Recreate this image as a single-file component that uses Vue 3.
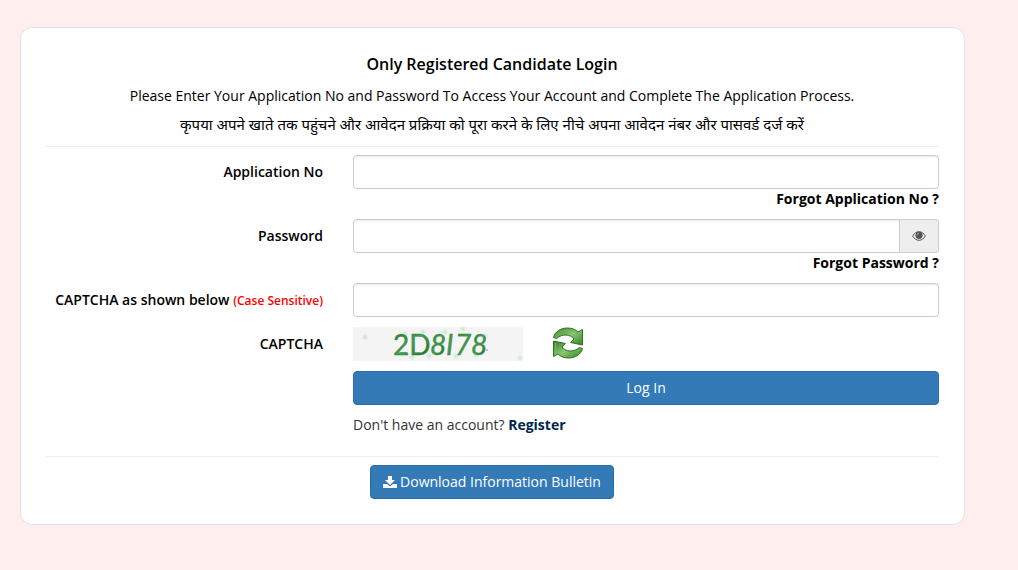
<script setup>
import { ref } from 'vue'

const applicationNo = ref('')
const password = ref('')
const captcha = ref('')
const showPassword = ref(false)
</script>

<template>
  <main class="page">
    <section class="card">
      <header class="intro">
        <h1>Only Registered Candidate Login</h1>
        <p>Please Enter Your Application No and Password To Access Your Account and Complete The Application Process.</p>
        <p class="hindi" lang="hi">कृपया अपने खाते तक पहुंचने और आवेदन प्रक्रिया को पूरा करने के लिए नीचे अपना आवेदन नंबर और पासवर्ड दर्ज करें</p>
      </header>

      <form class="login" @submit.prevent>
        <div class="row">
          <label for="application-no">Application No</label>
          <div class="field">
            <input id="application-no" v-model="applicationNo" type="text" class="control">
            <a href="#" class="forgot">Forgot Application No ?</a>
          </div>
        </div>

        <div class="row">
          <label for="password">Password</label>
          <div class="field">
            <div class="group">
              <input id="password" v-model="password" :type="showPassword ? 'text' : 'password'" class="control">
              <button type="button" class="addon" aria-label="Show password" @click="showPassword = !showPassword">
                <svg viewBox="0 0 14 12" width="14" height="12">
                  <path d="M.6 6C2.2 3.2 4.4 1.7 7 1.7S11.800 3.200 13.400 6C11.800 8.800 9.600 10.300 7 10.300S2.200 8.800.6 6Z" fill="none" stroke="#555" stroke-width="1" />
                  <circle cx="7" cy="5.300" r="3.600" fill="#555" />
                  <path d="M5 5.300C5 4.100 5.800 3.400 6.900 3.300" fill="none" stroke="#ccc" stroke-width=".8" />
                </svg>
              </button>
            </div>
            <a href="#" class="forgot">Forgot Password ?</a>
          </div>
        </div>

        <div class="row">
          <label for="captcha">CAPTCHA as shown below <small>(Case Sensitive)</small></label>
          <div class="field">
            <input id="captcha" v-model="captcha" type="text" class="control" autocomplete="off">
          </div>
        </div>

        <div class="row">
          <span class="label">CAPTCHA</span>
          <div class="field captcha">
            <svg class="code" viewBox="0 0 170 34" width="170" height="34">
              <defs>
                <linearGradient id="ink" x1="0" x2="1" y1="0" y2="1">
                  <stop offset="0" stop-color="#1d7a2c" />
                  <stop offset=".5" stop-color="#4a9a52" />
                  <stop offset="1" stop-color="#175f22" />
                </linearGradient>
                <filter id="soft" x="-1" y="-1" width="3" height="3"><feGaussianBlur stdDeviation="1" /></filter>
              </defs>
              <rect width="170" height="34" fill="#f4f4f4" />
              <g fill="#a9e5b2" filter="url(#soft)" opacity=".7">
                <circle cx="52" cy="7" r="2" /><circle cx="70" cy="5" r="2" /><circle cx="92" cy="5" r="2" />
                <circle cx="110" cy="2" r="2" /><circle cx="59" cy="30" r="2" /><circle cx="76" cy="29" r="2" />
                <circle cx="82" cy="12" r="2" /><circle cx="103" cy="29" r="2" /><circle cx="123" cy="28" r="2" />
                <circle cx="132" cy="9" r="2" /><circle cx="167" cy="31" r="2" />
              </g>
              <circle cx="12" cy="10" r="2" fill="#ccd4cc" filter="url(#soft)" />
              <circle cx="134" cy="23" r="1" fill="#bca7bc" />
              <g fill="url(#ink)" stroke="#2f8a3c" stroke-width=".4" font-size="28">
                <text x="40" y="28">2D</text>
                <g font-style="italic">
                  <text x="77" y="28">8</text>
                  <text x="93" y="28">I</text>
                  <text x="102" y="28">7</text>
                  <text x="118" y="28">8</text>
                </g>
              </g>
            </svg>
            <button type="button" class="refresh" aria-label="Refresh CAPTCHA">
              <svg viewBox="0 0 32 32" width="32" height="32">
                <defs>
                  <linearGradient id="leaf" x1="0" x2="1" y1="0" y2="1">
                    <stop offset="0" stop-color="#2f7d25" />
                    <stop offset=".5" stop-color="#8cc572" />
                    <stop offset="1" stop-color="#2f8420" />
                  </linearGradient>
                </defs>
                <g fill="url(#leaf)" stroke="#2d7324" stroke-width="1" stroke-linejoin="round">
                  <path d="M1.500 10.500C3 4.500 8.500 1 15.500 1C20 1 23.500 2.500 26 5L30.500 2.500V18L18.500 15.500L22 12C18 7 10.500 6.500 4.500 11.500Z" />
                  <path d="M30.500 21.500C29 27.500 23.500 31 16.500 31C12 31 8.500 29.500 6 27L1.500 29.500V14L13.500 16.500L10 20C14 25 21.500 25.500 27.500 20.500Z" />
                </g>
                <path d="M4 8.500Q9 3 16 3Q22 3 26 7L29 5M3.500 16V26.500" fill="none" stroke="#76b35e" stroke-width="1" />
              </svg>
            </button>
          </div>
        </div>

        <div class="row">
          <div class="field last">
            <button type="submit" class="button wide">Log In</button>
            <p class="account">Don't have an account? <a href="#">Register</a></p>
          </div>
        </div>
      </form>

      <footer class="bulletin">
        <a href="#" class="button">
          <svg viewBox="0 0 14 14" width="14" height="14" aria-hidden="true">
            <path d="M5 1H9V5H12L7 10L2 5H5Z" fill="#fff" />
            <path d="M0 9H4L7 11.500L10 9H14V13H0Z" fill="#fff" />
          </svg>
          Download Information Bulletin
        </a>
      </footer>
    </section>
  </main>
</template>

<style>
body {
  margin: 0;
  background: #ffeeee;
}
</style>

<style scoped>
* {
  box-sizing: border-box;
}

.page {
  padding: 27px 53px 45px 20px;
  font: 14px/20px "Open Sans", "Noto Sans", sans-serif;
  color: #333;
}

.card {
  padding: 24px 25px 25px 24px;
  background: #fff;
  border: 1px solid #e3e3e3;
  border-radius: 12px;
}

.intro {
  padding-bottom: 12px;
  border-bottom: 1px solid #eee;
  text-align: center;
  color: #000;
}

h1 {
  margin: 0 0 10px;
  font-size: 16px;
  font-weight: 600;
  line-height: 24px;
}

p {
  margin: 0;
}

.hindi {
  margin-top: 8px;
  font-size: 15px;
}

.login {
  display: grid;
  gap: 10px;
  margin: 8px 0 21px;
}

.row {
  display: grid;
  grid-template-columns: calc((100% + 30px) / 3 - 30px) 1fr;
  column-gap: 30px;
}

label,
.label {
  padding-top: 7px;
  color: #000;
  font-weight: 600;
  text-align: right;
}

small {
  color: #f00;
  font-size: 12px;
}

.field {
  min-width: 0;
}

.last {
  grid-column: 2;
}

.control {
  display: block;
  width: 100%;
  height: 34px;
  padding: 6px 12px;
  border: 1px solid #ccc;
  border-radius: 4px;
  background: #fff;
  color: #555;
  font: inherit;
  box-shadow: inset 0 1px 1px #00000013;
}

.group {
  display: flex;
}

.group .control {
  border-radius: 4px 0 0 4px;
}

.addon {
  display: grid;
  flex: 0 0 39px;
  place-items: center;
  padding: 0;
  border: 1px solid #ccc;
  border-left: 0;
  border-radius: 0 4px 4px 0;
  background: #eee;
}

.forgot {
  display: block;
  color: #000;
  font-weight: 700;
  text-align: right;
  text-decoration: none;
}

.captcha {
  display: flex;
  gap: 29px;
}

.code {
  overflow: visible;
  font-family: Lato, sans-serif;
}

.refresh {
  height: 32px;
  padding: 0;
  border: 0;
  background: none;
}

.refresh svg {
  display: block;
}

.button {
  display: inline-flex;
  align-items: center;
  justify-content: center;
  gap: 3px;
  height: 34px;
  padding: 0 12px;
  border: 1px solid #2e6da4;
  border-radius: 4px;
  background: #337ab7;
  color: #fff;
  font: inherit;
  text-decoration: none;
}

.wide {
  width: 100%;
}

.account {
  margin-top: 10px;
}

.account a {
  color: #00264d;
  font-weight: 700;
  text-decoration: none;
}

.bulletin {
  display: flex;
  justify-content: center;
  padding-top: 8px;
  border-top: 1px solid #eee;
}
</style>
